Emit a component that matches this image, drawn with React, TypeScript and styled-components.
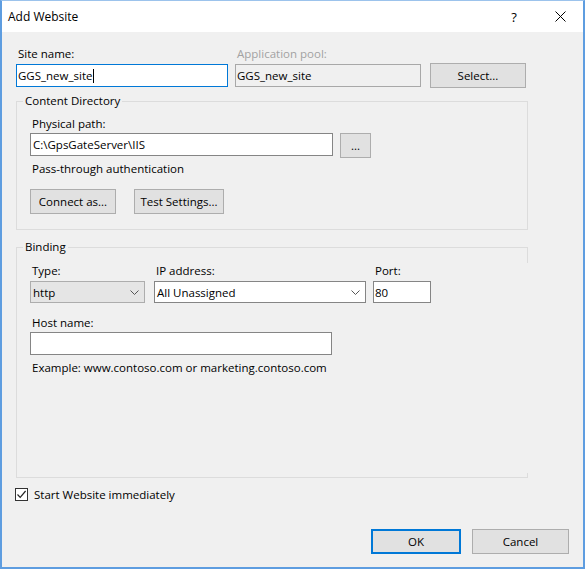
import React from "react";
import styled, {createGlobalStyle} from "styled-components";

const GlobalStyle = createGlobalStyle`
  html, body {
    margin: 0;
    padding: 0;
    background: #ffffff;
  }
  body {
    font-family: "Open Sans", "Noto Sans", sans-serif;
    font-size: 11.5px;
    color: #000000;
  }
  * {
    box-sizing: border-box;
  }
`;

function Chevron() {
    return (
        <svg width="9" height="5" viewBox="0 0 9 5">
            <polyline points="0.5,0.5 4.5,4.5 8.5,0.5" fill="none" stroke="#555" strokeWidth="1"/>
        </svg>
    );
}

function CloseIcon() {
    return (
        <svg width="11" height="11" viewBox="0 0 11 11">
            <line x1="0.5" y1="0.5" x2="10.5" y2="10.5" stroke="#000" strokeWidth="1"/>
            <line x1="10.5" y1="0.5" x2="0.5" y2="10.5" stroke="#000" strokeWidth="1"/>
        </svg>
    );
}

function CheckMark() {
    return (
        <svg width="11" height="11" viewBox="0 0 11 11">
            <polyline points="1.5,5.5 4.2,8.3 9.6,2" fill="none" stroke="#222" strokeWidth="1.2"/>
        </svg>
    );
}

export default function App() {
    return (
        <>
            <GlobalStyle/>
            <Window>
                <TitleBar>
                    <Title>Add Website</Title>
                    <CaptionButton>?</CaptionButton>
                    <CaptionButton><CloseIcon/></CaptionButton>
                </TitleBar>
                <Body>
                    <Row>
                        <Field $w={212} $mr={7}>
                            <Label>Site name:</Label>
                            <TextBox $w={212} $focus>GGS_new_site<Caret/></TextBox>
                        </Field>
                        <Field $w={186} $mr={9}>
                            <Label $disabled>Application pool:</Label>
                            <TextBox $w={186} $disabled>GGS_new_site</TextBox>
                        </Field>
                        <Button $w={96} $mt={17}>Select...</Button>
                    </Row>

                    <Group $mt={13}>
                        <Legend>Content Directory</Legend>
                        <Label>Physical path:</Label>
                        <Row>
                            <TextBox $w={303} $mt={1} $pl={2}>C:\GpsGateServer\IIS</TextBox>
                            <Button $w={31} $mt={1} $ml={7}>...</Button>
                        </Row>
                        <Label $mt={3}>Pass-through authentication</Label>
                        <Row $mt={12}>
                            <Button $w={86}>Connect as...</Button>
                            <Button $w={90} $ml={18}>Test Settings...</Button>
                        </Row>
                    </Group>

                    <BindingGroup $mt={17}>
                        <Legend>Binding</Legend>
                        <Row>
                            <Field $w={115} $mr={9}>
                                <Label>Type:</Label>
                                <ComboList $w={115}>http<Chevron/></ComboList>
                            </Field>
                            <Field $w={212} $mr={7}>
                                <Label>IP address:</Label>
                                <ComboEdit $w={212}>All Unassigned<Chevron/></ComboEdit>
                            </Field>
                            <Field $w={58}>
                                <Label>Port:</Label>
                                <TextBox $w={58} $mt={2} $h={22}>80</TextBox>
                            </Field>
                        </Row>
                        <Label $mt={12}>Host name:</Label>
                        <TextBox $w={302} $mt={1}/>
                        <Label $mt={5}>Example: www.contoso.com or marketing.contoso.com</Label>
                    </BindingGroup>

                    <CheckRow>
                        <CheckBox><CheckMark/></CheckBox>
                        <span>Start Website immediately</span>
                    </CheckRow>

                    <Footer>
                        <Button $w={90} $default>OK</Button>
                        <Button $w={97}>Cancel</Button>
                    </Footer>
                </Body>
            </Window>
        </>
    );
}

/* CSS */

const Window = styled.div`
  width: 585px;
  height: 569px;
  display: flex;
  flex-direction: column;
  border: 2px solid #5e9de0;
  border-top: 1px solid #9cc3ec;
  background: #f0f0f0;
`;

const TitleBar = styled.div`
  height: 31px;
  flex-shrink: 0;
  display: flex;
  align-items: center;
  background: #ffffff;
  padding-left: 6px;
`;

const Title = styled.span`
  flex: 1;
  font-size: 12px;
`;

const CaptionButton = styled.div`
  width: 46px;
  height: 31px;
  display: flex;
  align-items: center;
  justify-content: center;
  font-size: 13px;
`;

const Body = styled.div`
  flex: 1;
  display: flex;
  flex-direction: column;
  padding: 14px 14px 13px;
`;

const Row = styled.div<{ $mt?: number }>`
  display: flex;
  align-items: flex-start;
  margin-top: ${p => p.$mt || 0}px;
`;

const Field = styled.div<{ $w: number; $mr?: number }>`
  width: ${p => p.$w}px;
  margin-right: ${p => p.$mr || 0}px;
  display: flex;
  flex-direction: column;
`;

const Label = styled.div<{ $disabled?: boolean; $mt?: number }>`
  line-height: 16px;
  height: 16px;
  padding-left: 2px;
  white-space: nowrap;
  margin-top: ${p => p.$mt || 0}px;
  color: ${p => p.$disabled ? "#a2a2a2" : "#000000"};
`;

const TextBox = styled.div<{ $w: number; $h?: number; $mt?: number; $pl?: number; $focus?: boolean; $disabled?: boolean }>`
  width: ${p => p.$w}px;
  height: ${p => p.$h || 23}px;
  margin-top: ${p => p.$mt ?? 2}px;
  padding-left: ${p => p.$pl ?? 1}px;
  display: flex;
  align-items: center;
  white-space: nowrap;
  border: 1px solid ${p => p.$focus ? "#0078d7" : p.$disabled ? "#a8a8a8" : "#858585"};
  background: ${p => p.$disabled ? "#f0f0f0" : "#ffffff"};
`;

const Caret = styled.span`
  display: inline-block;
  width: 1px;
  height: 14px;
  background: #000;
  margin-left: 1px;
`;

const ComboList = styled.div<{ $w: number }>`
  width: ${p => p.$w}px;
  height: 22px;
  margin-top: 2px;
  padding: 0 5px 0 2px;
  display: flex;
  align-items: center;
  justify-content: space-between;
  background: #e5e5e5;
  border: 1px solid #adadad;
`;

const ComboEdit = styled(ComboList)`
  background: #ffffff;
  border-color: #858585;
`;

const Button = styled.div<{ $w: number; $mt?: number; $ml?: number; $default?: boolean }>`
  width: ${p => p.$w}px;
  height: 25px;
  margin-top: ${p => p.$mt || 0}px;
  margin-left: ${p => p.$ml || 0}px;
  display: flex;
  align-items: center;
  justify-content: center;
  white-space: nowrap;
  background: #e1e1e1;
  border: 1px solid ${p => p.$default ? "#0078d7" : "#adadad"};
  box-shadow: ${p => p.$default ? "inset 0 0 0 1px #0078d7" : "none"};
`;

const Group = styled.div<{ $mt?: number }>`
  position: relative;
  width: 512px;
  margin-top: ${p => p.$mt || 0}px;
  padding: 14px 13px 15px;
  border: 1px solid #dcdcdc;
  display: flex;
  flex-direction: column;
  align-items: flex-start;
`;

const BindingGroup = styled(Group)`
  height: 231px;
  padding-top: 15px;
  border-right: none;

  &::before, &::after {
    content: "";
    position: absolute;
    right: 0;
    width: 1px;
    background: #dcdcdc;
  }
  &::before {
    top: 0;
    height: 15px;
  }
  &::after {
    bottom: 0;
    height: 4px;
  }
`;

const Legend = styled.span`
  position: absolute;
  top: -9px;
  left: 6px;
  padding: 0 2px;
  line-height: 16px;
  background: #f0f0f0;
`;

const CheckRow = styled.div`
  display: flex;
  align-items: center;
  height: 16px;
  margin-top: 8px;
  gap: 6px;
`;

const CheckBox = styled.div`
  width: 13px;
  height: 13px;
  border: 1px solid #333333;
  background: #ffffff;
  display: flex;
  align-items: center;
  justify-content: center;
  margin-left: -1px;
`;

const Footer = styled.div`
  margin-top: auto;
  display: flex;
  justify-content: flex-end;
  gap: 11px;
`;

/* CSS */
